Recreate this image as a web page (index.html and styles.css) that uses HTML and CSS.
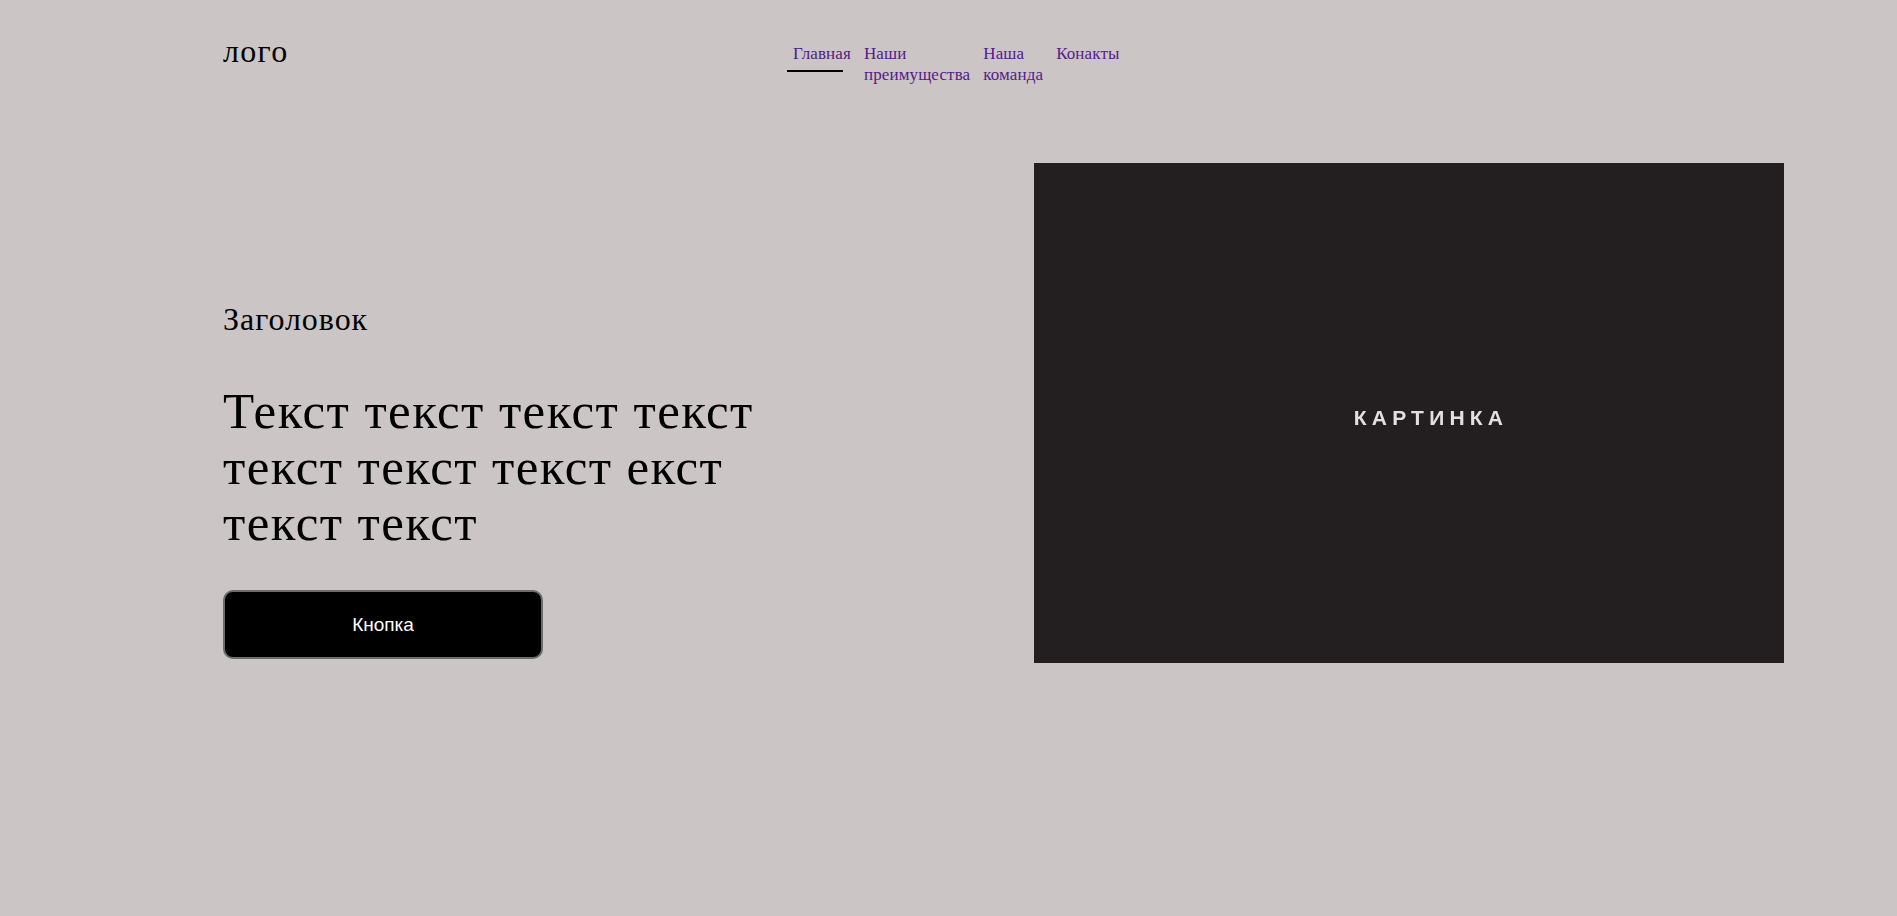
FILE: index.html
```html
<!DOCTYPE html>
<html lang="ru">
<head>
<meta charset="utf-8">
<title>Главная</title>
<link rel="stylesheet" href="styles.css">
</head>
<body>
<header class="header">
  <div class="logo">лого</div>
  <nav class="nav">
    <a class="nav-link nav-link--active" href="#">Главная</a>
    <a class="nav-link" href="#">Наши преимущества</a>
    <a class="nav-link" href="#">Наша команда</a>
    <a class="nav-link" href="#">Конакты</a>
  </nav>
</header>
<main class="hero">
  <div class="hero-text">
    <h2 class="hero-title">Заголовок</h2>
    <p class="hero-lead">Текст текст текст текст текст текст текст екст текст текст</p>
    <button class="hero-button" type="button">Кнопка</button>
  </div>
  <div class="hero-picture">
    <span class="hero-picture-label">КАРТИНКА</span>
  </div>
</main>
</body>
</html>
```
FILE: styles.css
```css
html, body {
  margin: 0;
  padding: 0;
}
body {
  background: #cbc5c5;
  font-family: "Liberation Serif", "Times New Roman", serif;
  color: #000;
  min-height: 916px;
}
.header {
  display: flex;
  align-items: flex-start;
  padding: 33px 0 0 223px;
}
.logo {
  font-size: 32px;
  letter-spacing: 1.3px;
  width: 570px;
  flex: none;
}
.nav {
  display: flex;
  align-items: flex-start;
  gap: 13px;
  padding-top: 11px;
}
.nav-link {
  position: relative;
  font-size: 17px;
  line-height: 20.5px;
  letter-spacing: 0.12px;
  color: #551a8b;
  text-decoration: none;
  width: min-content;
}
.nav-link--active::after {
  content: "";
  position: absolute;
  left: -6px;
  width: 56px;
  bottom: -7px;
  height: 2px;
  background: #000;
}
.hero {
  display: flex;
  justify-content: space-between;
  padding: 0 113px 0 223px;
  margin-top: 78px;
}
.hero-text {
  display: flex;
  flex-direction: column;
  align-items: flex-start;
  padding-top: 138px;
}
.hero-title {
  margin: 0;
  font-size: 32px;
  letter-spacing: 0.95px;
  font-weight: normal;
}
.hero-lead {
  margin: 45px 0 0;
  font-size: 51px;
  line-height: 56px;
  letter-spacing: 1.4px;
  width: 600px;
}
.hero-button {
  margin-top: 39px;
  width: 320px;
  height: 69px;
  background: #000;
  color: #fff;
  border: 2px solid #6e6b6b;
  border-radius: 10px;
  font-family: "Liberation Sans", Arial, sans-serif;
  font-size: 19px;
  cursor: pointer;
}
.hero-picture {
  width: 750px;
  height: 500px;
  background: #231f20;
  display: flex;
  align-items: center;
  justify-content: center;
  padding-left: 44px;
  box-sizing: border-box;
}
.hero-picture-label {
  color: #e2e0e0;
  font-family: "Liberation Sans", Arial, sans-serif;
  font-size: 21px;
  font-weight: bold;
  letter-spacing: 5.2px;
  margin-top: 9px;
  filter: blur(0.4px);
}
```
